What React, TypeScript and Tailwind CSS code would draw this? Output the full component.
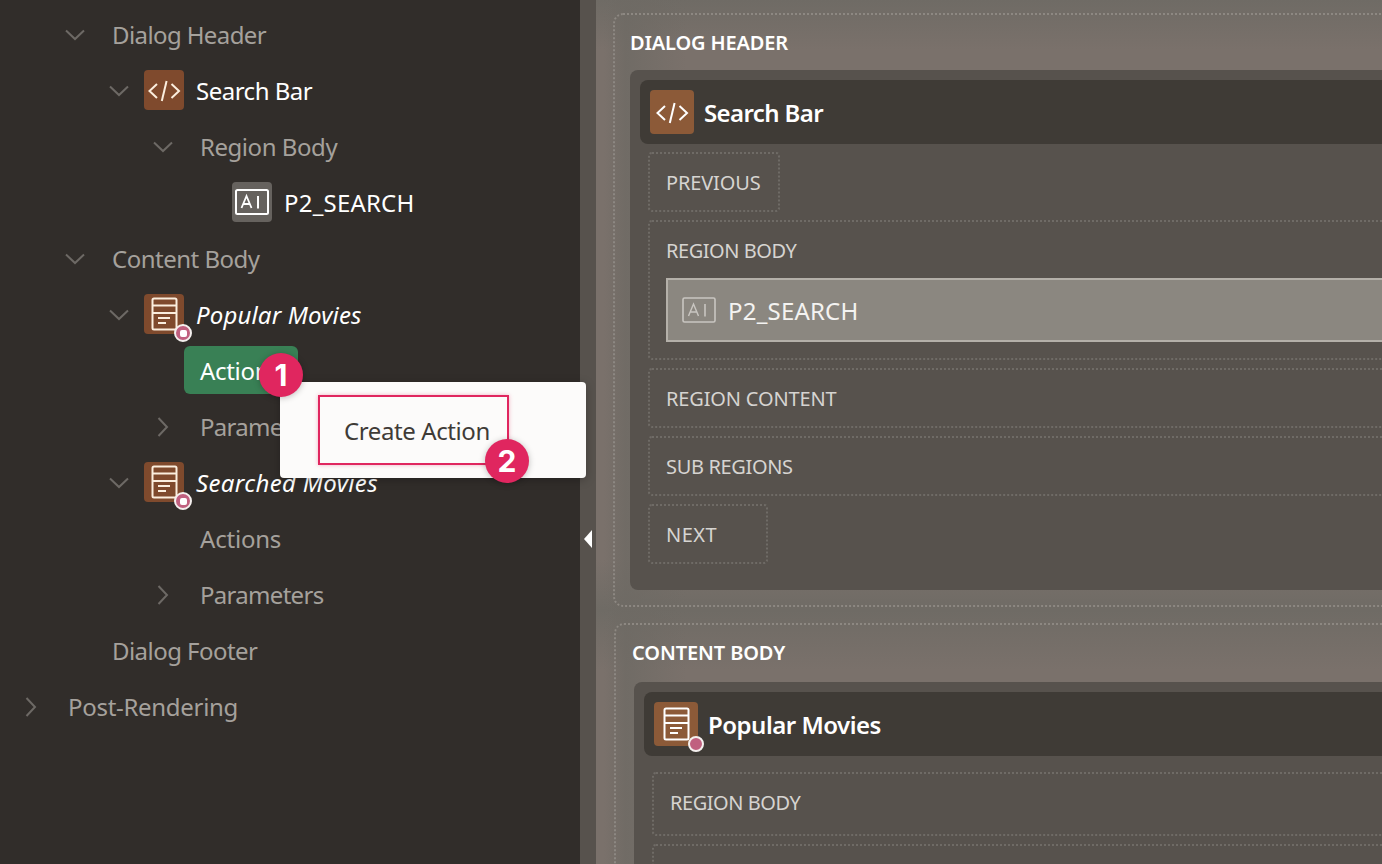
import React from "react";

const FONT = "font-['Noto_Sans',sans-serif]";

function Chevron({ dir }: { dir: "down" | "right" | "none" }) {
  return (
    <span className="flex h-[24px] w-[44px] shrink-0 items-center justify-center">
      {dir === "down" && (
        <svg width="20" height="12" viewBox="0 0 20 12" fill="none">
          <path d="M1 1.5 L10 10 L19 1.5" stroke="#6d6965" strokeWidth="2" />
        </svg>
      )}
      {dir === "right" && (
        <svg width="12" height="20" viewBox="0 0 12 20" fill="none">
          <path d="M1.5 1 L10 10 L1.5 19" stroke="#6d6965" strokeWidth="2" />
        </svg>
      )}
    </span>
  );
}

function CodeGlyph({ color }: { color: string }) {
  return (
    <svg width={40} height={40} viewBox="0 0 40 40" fill="none">
      <path d="M13 14 L5.5 21 L13 28" stroke={color} strokeWidth="2" />
      <path d="M27.5 14 L35 21 L27.5 28" stroke={color} strokeWidth="2" />
      <path d="M22.6 11 L17.8 31" stroke={color} strokeWidth="2" />
    </svg>
  );
}

function RegionGlyph({ color }: { color: string }) {
  return (
    <svg width={40} height={40} viewBox="0 0 40 40" fill="none">
      <rect x="8.5" y="4.5" width="24" height="31" rx="1.5" stroke={color} strokeWidth="2" />
      <path d="M8.5 11.5 H32.5 M8.5 19 H32.5" stroke={color} strokeWidth="2" />
      <path d="M14 24 H26 M14 29 H22" stroke={color} strokeWidth="2" />
    </svg>
  );
}

function ItemGlyph({ color, sw }: { color: string; sw: number }) {
  return (
    <svg width={34} height={28} viewBox="0 0 34 28" fill="none">
      <rect x="1" y="2" width="32" height="24" rx="1.5" stroke={color} strokeWidth={sw} />
      <path d="M6.5 20 L11.5 8 L16.5 20 M8.3 16 H14.7" stroke={color} strokeWidth={sw * 0.9} />
      <path d="M23 8 V20.5" stroke={color} strokeWidth={sw} />
    </svg>
  );
}

function TreeText({ children, track }: { children: React.ReactNode; track: string }) {
  return <span className={`ml-[15px] text-[24px] text-[#a5a19c] ${track}`}>{children}</span>;
}

function RowBox({ indent, children }: { indent: string; children: React.ReactNode }) {
  return <div className={`flex h-14 items-center ${indent}`}>{children}</div>;
}

function TreeRegion({ label, icon, italic, track }: { label: string; icon: "code" | "region"; italic?: boolean; track: string }) {
  return (
    <RowBox indent="pl-[97px]">
      <Chevron dir="down" />
      <span className="relative -mt-[2px] ml-[3px] flex h-10 w-10 items-center justify-center rounded-[4px] bg-[#7f4a2d]">
        {icon === "code" ? <CodeGlyph color="#fbeede" /> : <RegionGlyph color="#fbeede" />}
        {italic && (
          <span className="absolute left-[30px] top-[30px] flex h-[18px] w-[18px] items-center justify-center rounded-full border-2 border-[#f5f0ee] bg-[#c0607f]">
            <span className="h-[7px] w-[7px] rounded-[2px] bg-white" />
          </span>
        )}
      </span>
      <span className={`ml-3 text-[24px] text-white ${track} ${italic ? "italic" : ""}`}>{label}</span>
    </RowBox>
  );
}

function Tree() {
  return (
    <aside className="w-[580px] shrink-0 bg-[#312d2a] pt-[7px]">
      <RowBox indent="pl-[53px]">
        <Chevron dir="down" />
        <TreeText track="tracking-[-0.6px]">Dialog Header</TreeText>
      </RowBox>
      <TreeRegion label="Search Bar" icon="code" track="tracking-[-0.5px]" />
      <RowBox indent="pl-[141px]">
        <Chevron dir="down" />
        <TreeText track="tracking-[-0.45px]">Region Body</TreeText>
      </RowBox>
      <RowBox indent="pl-[185px]">
        <Chevron dir="none" />
        <span className="-mt-[2px] ml-[3px] flex h-10 w-10 items-center justify-center rounded-[4px] bg-[#66625e]">
          <ItemGlyph color="#ffffff" sw={2} />
        </span>
        <span className="ml-3 text-[24px] tracking-[0.2px] text-white">P2_SEARCH</span>
      </RowBox>
      <RowBox indent="pl-[53px]">
        <Chevron dir="down" />
        <TreeText track="tracking-[-0.5px]">Content Body</TreeText>
      </RowBox>
      <TreeRegion label="Popular Movies" icon="region" italic track="tracking-[0.15px]" />
      <RowBox indent="pl-[141px]">
        <Chevron dir="none" />
        <span className="-mt-[2px] -ml-px flex h-12 w-[114px] items-center overflow-hidden rounded-[6px] bg-[#398055] pl-4 pt-[2px] text-[24px] tracking-[-0.3px] text-white">
          Actions
        </span>
      </RowBox>
      <RowBox indent="pl-[141px]">
        <Chevron dir="right" />
        <TreeText track="tracking-[-0.7px]">Parameters</TreeText>
      </RowBox>
      <TreeRegion label="Searched Movies" icon="region" italic track="tracking-[0.35px]" />
      <RowBox indent="pl-[141px]">
        <Chevron dir="none" />
        <TreeText track="tracking-[-0.2px]">Actions</TreeText>
      </RowBox>
      <RowBox indent="pl-[141px]">
        <Chevron dir="right" />
        <TreeText track="tracking-[-0.7px]">Parameters</TreeText>
      </RowBox>
      <RowBox indent="pl-[53px]">
        <Chevron dir="none" />
        <TreeText track="tracking-[-0.55px]">Dialog Footer</TreeText>
      </RowBox>
      <RowBox indent="pl-[9px]">
        <Chevron dir="right" />
        <TreeText track="tracking-[-0.3px]">Post-Rendering</TreeText>
      </RowBox>
    </aside>
  );
}

function Splitter() {
  return (
    <div className="flex w-4 shrink-0 items-center justify-center bg-[#57524d] pb-[190px]">
      <span className="mt-[404px] h-0 w-0 border-y-[9px] border-r-[8px] border-y-transparent border-r-white" />
    </div>
  );
}

function Slot({ label, width, height, track, nudge }: { label: string; width?: string; height: string; track?: string; nudge: string }) {
  return (
    <div className={`flex items-center rounded-[4px] border-2 border-dotted border-[#6f6b66] pl-4 text-[20px] text-[#d6d4d1] ${nudge} ${width ?? ""} ${height} ${track ?? ""}`}>
      {label}
    </div>
  );
}

function PageDesigner() {
  return (
    <main className="min-w-0 flex-1 overflow-hidden bg-[linear-gradient(90deg,rgba(110,106,100,0)_0px,rgba(110,106,100,0)_8px,rgba(110,106,100,0.8)_30px,rgba(110,106,100,0)_90px),linear-gradient(180deg,#6f6b65_0px,#7a716b_50px,#7a716b_560px,#6f6b65_610px,#7a716b_670px)]">
      <div className="w-[900px] pl-[17px] pt-[13px]">
        <section className="h-[594px] rounded-[10px] border-2 border-dotted border-[#8d8882] pl-[15px] pr-4 pt-[13px]">
          <h2 className="text-[20px] font-semibold leading-[30px] tracking-[-0.15px] text-white">DIALOG HEADER</h2>
          <div className="mt-[12px] h-[520px] rounded-[8px] bg-[#57524d] p-[10px]">
            <div className="flex h-16 items-center rounded-[8px] bg-[#3f3b36] pl-[10px]">
              <span className="flex h-11 w-11 items-center justify-center rounded-[4px] bg-[#8c5a38]">
                <CodeGlyph color="#ffffff" />
              </span>
              <span className="ml-[10px] mt-[2px] text-[24px] font-semibold tracking-[-0.6px] text-white">Search Bar</span>
            </div>
            <div className="flex flex-col gap-2 pl-2 pt-2">
              <Slot label="PREVIOUS" width="w-[132px]" height="h-[60px]" track="tracking-[-0.15px]" nudge="pt-[2px]" />
              <div className="h-[140px] rounded-[4px] border-2 border-dotted border-[#6f6b66] px-4 pt-[14px]">
                <div className="text-[20px] leading-[30px] tracking-[-0.45px] text-[#d6d4d1]">REGION BODY</div>
                <div className="mt-[12px] flex h-16 items-center border-2 border-[#b4b0a9] bg-[#8b8780] pl-[14px]">
                  <ItemGlyph color="#c9c6c1" sw={1.6} />
                  <span className="ml-[12px] mt-[2px] text-[24px] tracking-[0.2px] text-[#f4f3f1]">P2_SEARCH</span>
                </div>
              </div>
              <Slot label="REGION CONTENT" height="h-[60px]" track="tracking-[-0.15px]" nudge="pt-[2px]" />
              <Slot label="SUB REGIONS" height="h-[60px]" track="tracking-[-0.35px]" nudge="pt-[2px]" />
              <Slot label="NEXT" width="w-[120px]" height="h-[60px]" track="tracking-[0.5px]" nudge="pt-[2px]" />
            </div>
          </div>
        </section>
        <section className="ml-px mt-4 h-[300px] rounded-[10px] border-2 border-dotted border-[#8d8882] pl-4 pr-4 pt-[13px]">
          <h2 className="text-[20px] font-semibold leading-[30px] tracking-[-0.1px] text-white">CONTENT BODY</h2>
          <div className="ml-[2px] mt-[14px] h-[300px] rounded-[8px] bg-[#57524d] p-[10px]">
            <div className="flex h-16 items-center rounded-[8px] bg-[#3f3b36] pl-[10px]">
              <span className="relative flex h-11 w-11 items-center justify-center rounded-[4px] bg-[#8c5a38]">
                <RegionGlyph color="#ffffff" />
                <span className="absolute left-[34px] top-[34px] h-4 w-4 rounded-full border-2 border-[#f5f0ee] bg-[#c0607f]" />
              </span>
              <span className="ml-[10px] mt-[2px] text-[24px] font-semibold tracking-[-0.5px] text-white">Popular Movies</span>
            </div>
            <div className="flex flex-col gap-2 pl-2 pt-4">
              <Slot label="REGION BODY" height="h-16" track="tracking-[-0.45px]" nudge="pb-[2px]" />
              <Slot label="" height="h-[60px]" nudge="pt-0" />
            </div>
          </div>
        </section>
      </div>
    </main>
  );
}

function Badge({ n, pos }: { n: string; pos: string }) {
  return (
    <span className={`absolute flex h-11 w-11 items-center justify-center rounded-full bg-[#e0265f] font-['Inter',sans-serif] text-[30px] font-bold text-white shadow-[0_1px_6px_rgba(0,0,0,0.25)] ${pos}`}>
      {n}
    </span>
  );
}

function Popup() {
  return (
    <>
      <div className="absolute left-[280px] top-[382px] h-24 w-[306px] rounded-[4px] bg-[#fcfbfa] pl-[38px] pt-[13px] shadow-[0_2px_10px_rgba(0,0,0,0.25)]">
        <div className="flex h-[70px] w-[191px] items-center border-2 border-[#e0265f] pl-[24px] pt-[2px] text-[24px] tracking-[-0.4px] text-[#3f3b37] shadow-[0_0_4px_rgba(224,38,95,0.35)]">
          Create Action
        </div>
      </div>
      <Badge n="1" pos="left-[259px] top-[353px]" />
      <Badge n="2" pos="left-[485px] top-[439px]" />
    </>
  );
}

export default function App() {
  return (
    <div className={`relative flex h-[864px] w-[1382px] overflow-hidden ${FONT}`}>
      <Tree />
      <Splitter />
      <PageDesigner />
      <Popup />
    </div>
  );
}
